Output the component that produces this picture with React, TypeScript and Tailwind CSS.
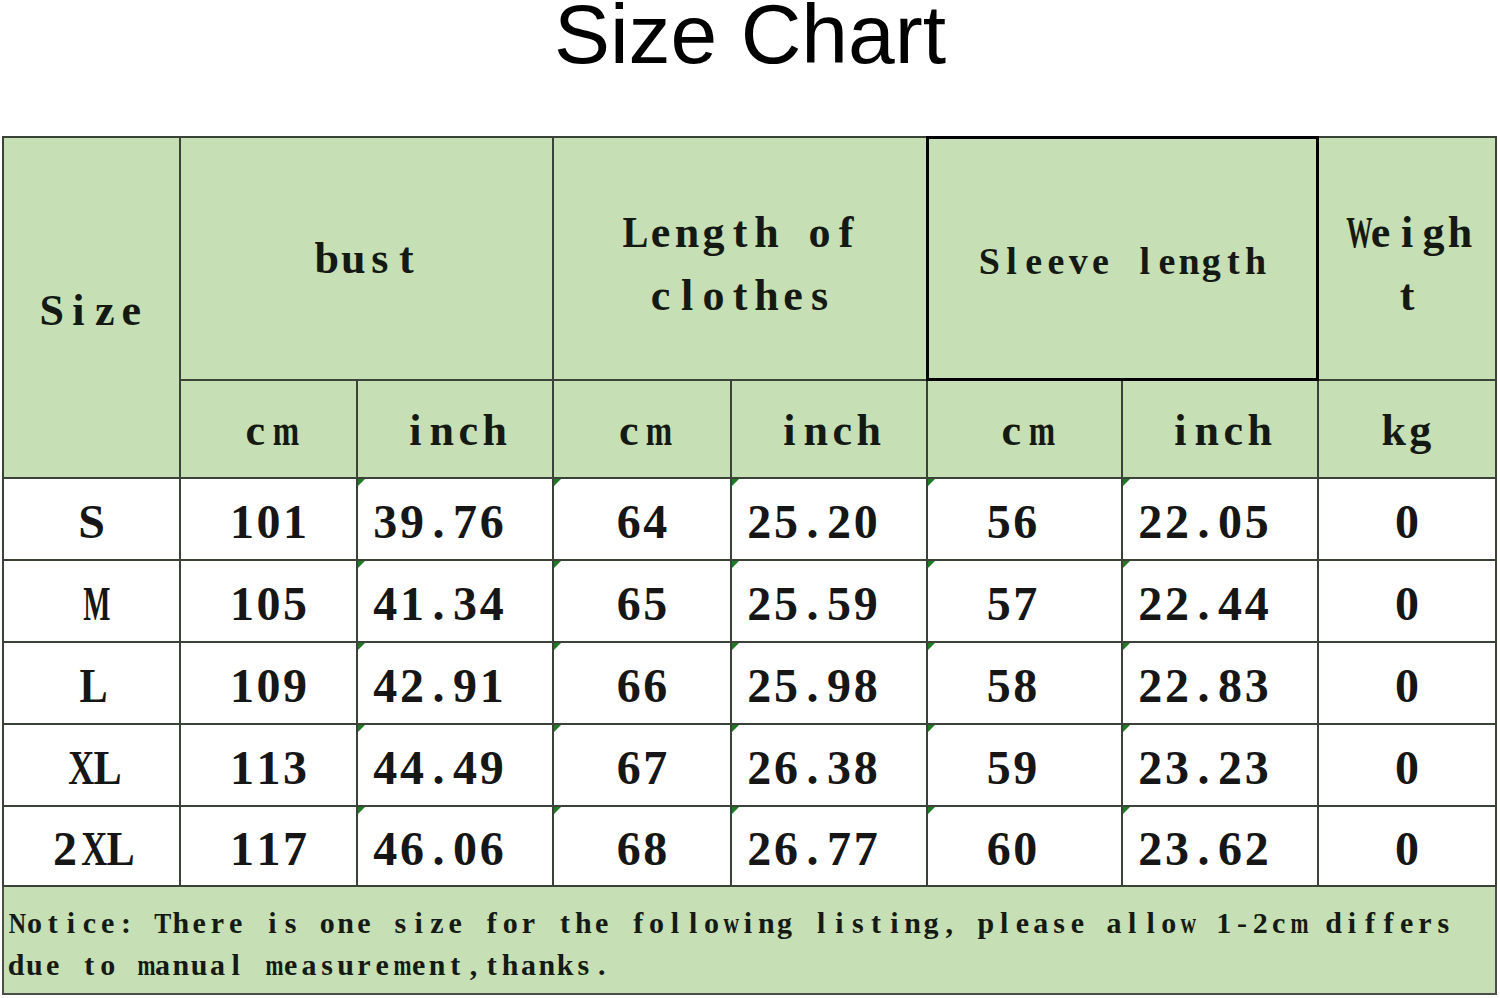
import React from "react";

const sizes = [
  ["S", "101", "39.76", "64", "25.20", "56", "22.05", "0"],
  ["M", "105", "41.34", "65", "25.59", "57", "22.44", "0"],
  ["L", "109", "42.91", "66", "25.98", "58", "22.83", "0"],
  ["XL", "113", "44.49", "67", "26.38", "59", "23.23", "0"],
  ["2XL", "117", "46.06", "68", "26.77", "60", "23.62", "0"],
];

// wide letters get narrowed so they fit their fixed cell
const squeeze: Record<string, string> = {
  m: "scale-x-[0.72]",
  w: "scale-x-[0.72]",
  M: "scale-x-[0.6]",
  W: "scale-x-[0.6]",
  X: "scale-x-[0.75]",
  L: "scale-x-[0.88]",
  N: "scale-x-[0.8]",
  T: "scale-x-[0.85]",
};

// fixed-pitch letters, like the half-width Latin of a CJK font
function Mono({ text, cell }: { text: string; cell: string }) {
  return (
    <span className="whitespace-nowrap">
      {Array.from(text).map((ch, i) => (
        <span key={i} className={`inline-block text-center ${cell} ${squeeze[ch] ?? ""}`}>
          {ch === " " ? "\u00a0" : ch}
        </span>
      ))}
    </span>
  );
}

function Flag() {
  return (
    <span className="absolute left-0 top-0 h-0 w-0 border-t-[7px] border-r-[7px] border-t-[#1f7a24] border-r-transparent" />
  );
}

function HeadCell({ children, className = "" }: { children: React.ReactNode; className?: string }) {
  return (
    <div className={`flex flex-col items-center justify-center bg-[#c6dfb4] font-bold text-[#141a13] ${className}`}>
      {children}
    </div>
  );
}

export default function App() {
  return (
    <div className="h-[998px] w-[1500px] bg-white font-['Liberation_Serif',serif]">
      <div className="h-[136px] text-center">
        <h1 className="font-['Liberation_Sans',Arial,sans-serif] text-[84px] leading-[68px] text-black">Size Chart</h1>
      </div>

      <div className="pl-[2px]">
        <div className="grid w-fit grid-cols-[175px_175px_194px_176px_194px_193px_194px_176px] grid-rows-[241px_96px_80px_80px_80px_80px_78px] gap-[2px] bg-[#3b4238] p-[2px]">
          <HeadCell className="row-span-2 pt-[6px] text-[44px]">
            <Mono text="Size" cell="w-[26.5px]" />
          </HeadCell>
          <HeadCell className="col-span-2 text-[44px]">
            <Mono text="bust" cell="w-[26.5px]" />
          </HeadCell>
          <HeadCell className="col-span-2 pt-[10px] text-[44px] leading-[63px]">
            <Mono text="Length of" cell="w-[26.5px]" />
            <Mono text="clothes" cell="w-[26.5px]" />
          </HeadCell>
          <HeadCell className="relative z-10 col-span-2 pt-[6px] text-[38px] ring-2 ring-black inset-ring inset-ring-black">
            <Mono text="Sleeve length" cell="w-[22.2px]" />
          </HeadCell>
          <HeadCell className="pt-[10px] text-[44px] leading-[63px]">
            <Mono text="Weigh" cell="w-[26.5px]" />
            <Mono text="t" cell="w-[26.5px]" />
          </HeadCell>

          {["cm", "inch", "cm", "inch", "cm", "inch", "kg"].map((u, i) => (
            <HeadCell key={i} className="pt-[4px] text-[44px]">
              <Mono text={u} cell="w-[26.5px]" />
            </HeadCell>
          ))}

          {sizes.map((row) =>
            row.map((v, c) => {
              const flag = c >= 2 && c <= 6;
              const left = c === 2 || c === 4 || c === 6;
              return (
                <div
                  key={row[0] + c}
                  className={`relative flex items-center bg-white pt-[6px] text-[48px] font-bold text-[#161616] ${
                    left ? "justify-start pl-[14px]" : "justify-center"
                  } ${c === 5 ? "pr-[25px]" : ""}`}
                >
                  {flag && <Flag />}
                  <Mono text={v} cell="w-[26.6px]" />
                </div>
              );
            })
          )}
        </div>

        <div className="h-[108px] w-[1495px] border-x-2 border-b-2 border-[#4a5047] bg-[#c6dfb4] pl-[3px] pt-[15px] text-[30px] font-bold leading-[42px] text-[#151a14]">
          <div>
            <Mono text="Notice: There is one size for the following listing, please allow 1-2cm differs" cell="w-[18.3px]" />
          </div>
          <div>
            <Mono text="due to manual measurement,thanks." cell="w-[18.3px]" />
          </div>
        </div>
      </div>
    </div>
  );
}
